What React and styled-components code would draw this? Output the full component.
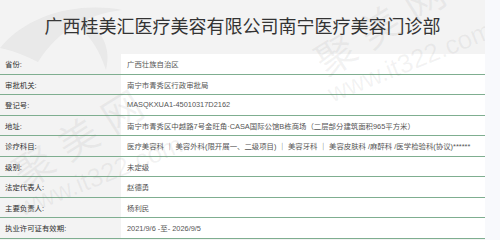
import React from "react";
import styled, { createGlobalStyle } from "styled-components";

const rows = [
  { label: "省份:", value: "广西壮族自治区" },
  { label: "审批机关:", value: "南宁市青秀区行政审批局" },
  { label: "登记号:", value: "MASQKXUA1-45010317D2162" },
  {
    label: "地址:",
    value: "南宁市青秀区中越路7号金旺角·CASA国际公馆B栋商场（二层部分建筑面积965平方米）",
  },
  {
    label: "诊疗科目:",
    value:
      "医疗美容科 ｜ 美容外科(限开展一、二级项目) ｜ 美容牙科 ｜ 美容皮肤科 /麻醉科 /医学检验科(协议)******",
  },
  { label: "级别:", value: "未定级" },
  { label: "法定代表人:", value: "赵德勇" },
  { label: "主要负责人:", value: "杨利民" },
  { label: "执业许可证有效期:", value: "2021/9/6 -至- 2026/9/5" },
];

function App() {
  return (
    <>
      <GlobalStyle />
      <Page>
        <Main>
          <Header>广西桂美汇医疗美容有限公司南宁医疗美容门诊部</Header>
          <Table>
            {rows.map((r) => (
              <Row key={r.label}>
                <Label>{r.label}</Label>
                <Value>{r.value}</Value>
              </Row>
            ))}
          </Table>
          <Watermark>
            <Logo width="130" height="110" viewBox="0 0 130 110">
              <path d="M0 48 C28 14 78 2 122 10 C88 14 58 30 38 62 C26 56 12 50 0 48 Z" />
              <path d="M84 16 C100 30 112 46 106 70 C100 52 92 38 78 26 Z" />
            </Logo>
            <BigMark $x={82} $y={134}>聚美网</BigMark>
            <BigMark $x={384} $y={22}>聚美网</BigMark>
            <UrlMark $x={100} $y={176}>www.it322.com</UrlMark>
            <UrlMark $x={410} $y={62}>www.it322.com</UrlMark>
          </Watermark>
        </Main>
        <Side />
      </Page>
    </>
  );
}

const GlobalStyle = createGlobalStyle`
  body {
    margin: 0;
    background-color: #f8f9fc;
    font-family: "Liberation Sans", "Noto Sans CJK SC", sans-serif;
  }
`;

const Page = styled.div`
  display: flex;
  width: 500px;
  height: 240px;
  overflow: hidden;
`;

const Main = styled.div`
  position: relative;
  width: 485px;
  background-color: #f3f3f3;
  overflow: hidden;
`;

const Side = styled.div`
  flex: 1;
  background-color: #f8f9fc;
`;

const Header = styled.div`
  height: 54px;
  padding-bottom: 4px;
  box-sizing: border-box;
  display: flex;
  align-items: center;
  justify-content: center;
  font-family: "Noto Sans CJK SC", sans-serif;
  font-size: 18px;
  color: #333;
`;

const Table = styled.div`
  display: flex;
  flex-direction: column;
`;

const Row = styled.div`
  display: grid;
  grid-template-columns: 121px 1fr;
  height: 20.5px;
  box-sizing: border-box;
  border-bottom: 1px solid #7fae90;
`;

const Label = styled.div`
  display: flex;
  align-items: center;
  padding-left: 5px;
  font-size: 7.4px;
  color: #2e2e2e;
  white-space: nowrap;
`;

const Value = styled.div`
  display: flex;
  align-items: center;
  padding-left: 6px;
  background-color: #fff;
  font-size: 7.4px;
  color: #555;
  white-space: nowrap;
`;

const Watermark = styled.div`
  position: absolute;
  inset: 0;
  pointer-events: none;
`;

const Logo = styled.svg`
  position: absolute;
  left: 0;
  top: 0;
  fill: rgba(120, 120, 120, 0.08);
`;

const BigMark = styled.span`
  position: absolute;
  left: ${(p) => p.$x}px;
  top: ${(p) => p.$y}px;
  transform: translate(-50%, -50%) rotate(-32deg);
  font-family: "Noto Sans CJK SC", sans-serif;
  font-size: 40px;
  letter-spacing: 12px;
  color: rgba(120, 120, 120, 0.09);
  white-space: nowrap;
`;

const UrlMark = styled.span`
  position: absolute;
  left: ${(p) => p.$x}px;
  top: ${(p) => p.$y}px;
  transform: translate(-50%, -50%) rotate(-22deg);
  font-family: "Liberation Sans", sans-serif;
  font-size: 26px;
  color: rgba(120, 120, 120, 0.09);
  white-space: nowrap;
`;

export default App;
